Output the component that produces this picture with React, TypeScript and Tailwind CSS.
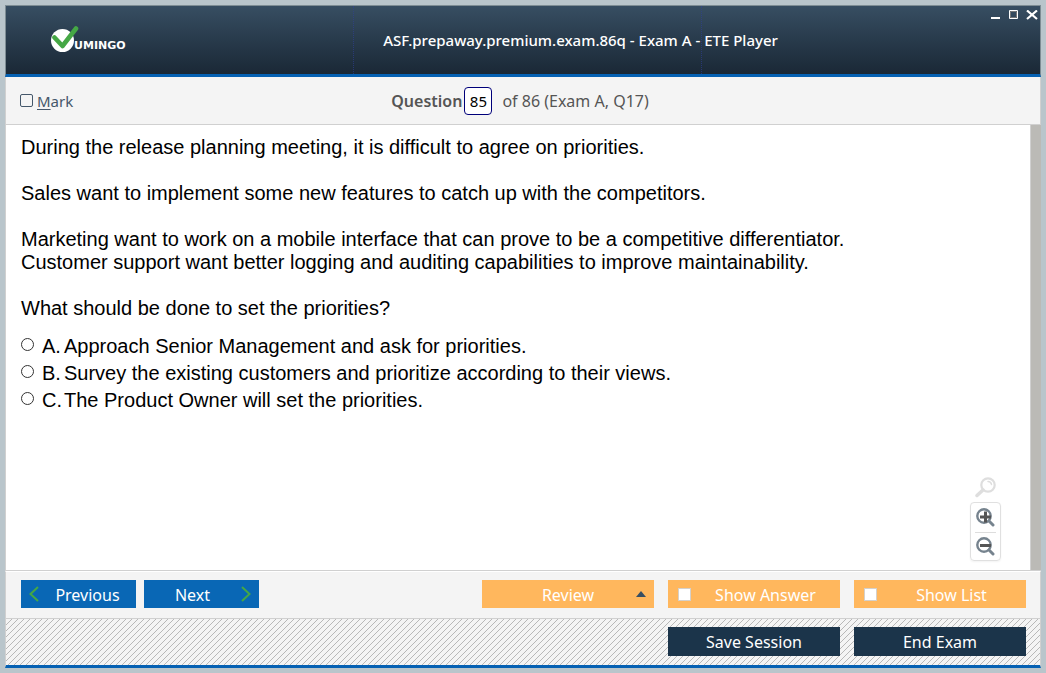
import { useState } from "react";

const paragraphs: string[][] = [
  ["During the release planning meeting, it is difficult to agree on priorities."],
  ["Sales want to implement some new features to catch up with the competitors."],
  [
    "Marketing want to work on a mobile interface that can prove to be a competitive differentiator.",
    "Customer support want better logging and auditing capabilities to improve maintainability.",
  ],
  ["What should be done to set the priorities?"],
];

const answers = [
  { letter: "A", text: "Approach Senior Management and ask for priorities." },
  { letter: "B", text: "Survey the existing customers and prioritize according to their views." },
  { letter: "C", text: "The Product Owner will set the priorities." },
];

function Logo() {
  return (
    <svg width="84" height="28" viewBox="0 0 84 28" className="shrink-0" role="img" aria-label="Vumingo">
      <circle cx="11.500" cy="14.500" r="11.500" fill="#fff" />
      <path d="M3.500 11.500 L11.500 20 L25 2.500" fill="none" stroke="#45a745" strokeWidth="4.600" strokeLinecap="round" strokeLinejoin="round" />
      <text x="23" y="22.500" fill="#fff" fontSize="11" fontWeight="700" fontFamily="DejaVu Sans, sans-serif">
        UMINGO
      </text>
    </svg>
  );
}

function WindowControls() {
  return (
    <div className="absolute top-1 right-0.5 flex items-center gap-2 text-white">
      <button type="button" aria-label="Minimize" className="h-2.5 w-2.5">
        <svg width="10" height="10"><path d="M1 7h9v2H1z" fill="currentColor" /></svg>
      </button>
      <button type="button" aria-label="Maximize" className="h-2.5 w-2.5">
        <svg width="10" height="10"><path d="M1.500 .5h8v8h-8z" fill="none" stroke="currentColor" /><path d="M2.500 1.500h6v6h-6z" fill="none" stroke="#777" /></svg>
      </button>
      <button type="button" aria-label="Close" className="h-2.5 w-3">
        <svg width="12" height="10"><path d="M1 .5l10 8.500M11 .5l-10 8.500" stroke="currentColor" strokeWidth="2.200" /></svg>
      </button>
    </div>
  );
}

function Magnifier({ sign }: { sign: "plus" | "minus" }) {
  return (
    <svg width="19" height="19" viewBox="0 0 19 19" fill="none">
      <circle cx="8" cy="8" r="6.700" stroke="#76838e" strokeWidth="2.400" />
      <path d="M13 13l4 4" stroke="#76838e" strokeWidth="3" strokeLinecap="round" />
      <path d={sign === "plus" ? "M4 9h11M9.500 3.500v11" : "M4 8.500h11"} stroke="#555" strokeWidth="3" />
    </svg>
  );
}

function ToggleButton({ label }: { label: string }) {
  return (
    <label className="flex h-7 w-43 items-center bg-[#ffb75d] pl-2.5 text-base text-white">
      <input type="checkbox" className="h-3.25 w-3.25 shrink-0 appearance-none border border-[#d5d0ca] bg-white checked:bg-[#1b344a]" />
      <span className="flex-1 pt-0.5 text-center">{label}</span>
    </label>
  );
}

export default function App() {
  const [choice, setChoice] = useState("");
  return (
    <div className="flex min-h-screen flex-col bg-[#b9c5cb] p-[5px] font-['Noto_Sans',sans-serif]">
      <div className="flex flex-1 flex-col">
        <header className="relative flex h-18 items-center border-x border-t border-b-3 border-x-[#7e8d94] border-t-[#7e8d94] border-b-[#0561b3] bg-linear-to-b from-[#374e62] to-[#1a2836]">
          <div className="pointer-events-none absolute inset-y-0 left-[347px] w-[349px] border-x border-dotted border-[#2f3f9a]/60" />
          <div className="flex w-[115px] pl-[45px]"><Logo /></div>
          <h1 className="flex-1 text-center text-[15px] font-medium text-white">ASF.prepaway.premium.exam.86q - Exam A - ETE Player</h1>
          <WindowControls />
        </header>

        <div className="flex h-12 items-center border-x border-b border-[#d0d0d0] bg-[#f4f4f4] text-base text-[#555]">
          <label className="flex flex-1 items-center gap-1 pl-3.5 text-[15px] text-[#44576a]">
            <input type="checkbox" className="h-3.25 w-3.25 appearance-none rounded-xs border border-[#44576a] checked:bg-[#44576a]" />
            <span className="pt-0.5"><span className="underline underline-offset-2">M</span>ark</span>
          </label>
          <div className="flex items-center">
            <label htmlFor="question" className="font-semibold">Question</label>
            <input id="question" type="text" defaultValue="85" className="mr-1 ml-0.5 h-7 w-7 rounded-sm border border-[#00007a] bg-white text-center text-[15px] text-black" />
            <span className="pl-1.5">of 86 (Exam A, Q17)</span>
          </div>
          <div className="flex-1 pr-5" />
        </div>

        <div className="flex flex-1 border-b border-l border-[#d0d0d0] bg-white">
          <main className="relative flex-1 px-[15px] pt-[11px] font-['Liberation_Sans',sans-serif] text-[20px] leading-[23px] text-black">
            <div className="flex flex-col gap-[23px]">
              {paragraphs.map((lines) => (
                <p key={lines[0]}>
                  {lines.map((line) => <span key={line} className="block">{line}</span>)}
                </p>
              ))}
            </div>
            <fieldset className="mt-[13px]">
              {answers.map(({ letter, text }) => (
                <label key={letter} className="flex h-[27px] items-center">
                  <input type="radio" name="answer" checked={choice === letter} onChange={() => setChoice(letter)} className="mb-1 h-3.25 w-3.25 appearance-none rounded-full border border-[#333] checked:border-4" />
                  <span className="w-[30px] pl-2">{letter}.</span>
                  <span>{text}</span>
                </label>
              ))}
            </fieldset>
            <div className="absolute right-[29px] bottom-[9px] flex flex-col items-center gap-1">
              <button type="button" aria-label="Reset zoom">
                <svg width="22" height="21" viewBox="0 0 22 21" fill="none" stroke="#dedede" strokeLinecap="round">
                  <circle cx="13" cy="8" r="6.700" strokeWidth="2.200" />
                  <path d="M8 13l-6 5.500" strokeWidth="3.500" />
                  <path d="M13 4.500q3 0 3.500 3" strokeWidth="1.500" />
                </svg>
              </button>
              <div className="flex flex-col items-center rounded-sm border border-[#e0e0e0] px-1 shadow-xs">
                <button type="button" aria-label="Zoom in" className="flex h-[29px] w-[21px] items-center justify-center"><Magnifier sign="plus" /></button>
                <button type="button" aria-label="Zoom out" className="flex h-7 w-[21px] items-center justify-center border-t border-[#ddd]"><Magnifier sign="minus" /></button>
              </div>
            </div>
          </main>
          <div className="w-[11px] border-l border-[#d0d0d0] bg-[#bbbab6]" />
        </div>

        <div className="flex h-12 items-start gap-3.5 border-x border-t border-b border-[#d0d0d0] border-t-white bg-[#f4f4f4] pt-2 pr-3.5 pl-[15px] text-base text-white">
          <div className="flex flex-1 gap-2">
            <button type="button" className="flex h-7 w-[115px] items-center bg-[#0967b5] px-2">
              <svg width="10" height="16" fill="none" stroke="#45a745" strokeWidth="2"><path d="M9 1L1.500 8L9 15" /></svg>
              <span className="flex-1 pt-0.5 pl-2">Previous</span>
            </button>
            <button type="button" className="flex h-7 w-[115px] items-center bg-[#0967b5] px-2">
              <span className="flex-1 pt-0.5 pr-2 text-center">Next</span>
              <svg width="10" height="16" fill="none" stroke="#45a745" strokeWidth="2"><path d="M1 1L8.500 8L1 15" /></svg>
            </button>
          </div>
          <button type="button" className="flex h-7 w-43 items-center bg-[#ffb75d] px-2">
            <span className="flex-1 pt-0.5 pl-2.5 text-center">Review</span>
            <svg width="10" height="6"><path d="M5 0L10 6H0z" fill="#374e62" /></svg>
          </button>
          <ToggleButton label="Show Answer" />
          <ToggleButton label="Show List" />
        </div>

        <footer className="flex h-[49px] items-start justify-end gap-3.5 border-x border-b-3 border-x-[#d0d0d0] border-b-[#0561b3] bg-[#f4f4f4] bg-[linear-gradient(135deg,#f4f4f4_42%,#b8b8b8_50%,#f4f4f4_58%)] bg-size-[6px_6px] px-3.5 pt-2 text-base text-white">
          <button type="button" className="h-[29px] w-43 bg-[#1b344a]">Save Session</button>
          <button type="button" className="h-[29px] w-43 bg-[#1b344a]">End Exam</button>
        </footer>
      </div>
    </div>
  );
}
